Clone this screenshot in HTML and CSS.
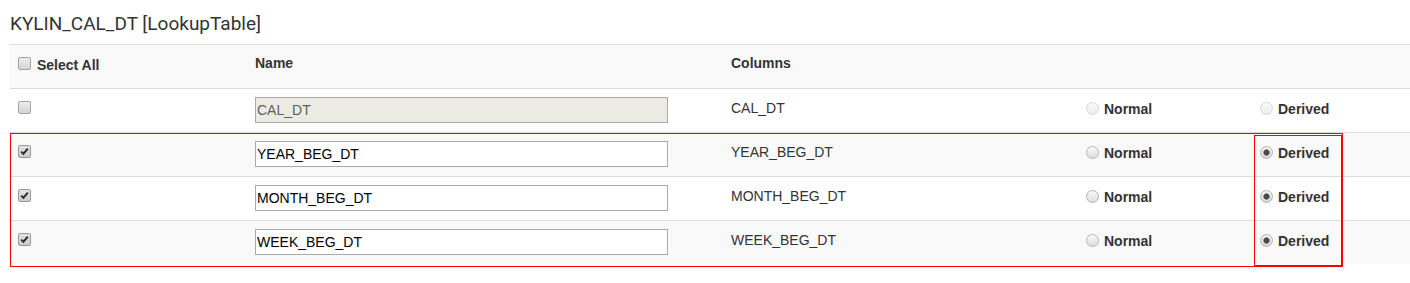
FILE: index.html
```html
<!DOCTYPE html>
<html>
<head>
<meta charset="utf-8">
<link rel="stylesheet" href="styles.css">
</head>
<body>
<div class="page">
  <h3 class="title">KYLIN_CAL_DT [LookupTable]</h3>
  <div class="grid">
    <div class="row head">
      <div class="cell sel"><label class="chk"><span class="cb"></span>Select All</label></div>
      <div class="cell th">Name</div>
      <div class="cell th">Columns</div>
      <div class="cell"></div>
      <div class="cell"></div>
    </div>
    <div class="row">
      <div class="cell c1"><span class="cb"></span></div>
      <div class="cell c2"><input class="inp" type="text" value="CAL_DT" disabled></div>
      <div class="cell c3">CAL_DT</div>
      <div class="cell c4"><label class="opt"><span class="rd dis"></span>Normal</label></div>
      <div class="cell c4"><label class="opt"><span class="rd dis"></span>Derived</label></div>
    </div>
    <div class="row alt">
      <div class="cell c1"><span class="cb on"><svg viewBox="0 0 11 11" width="11" height="11"><path d="M2.2 5.6 L4.4 7.8 L8.8 2.6" fill="none" stroke="#2b2b2b" stroke-width="2"/></svg></span></div>
      <div class="cell c2"><input class="inp" type="text" value="YEAR_BEG_DT"></div>
      <div class="cell c3">YEAR_BEG_DT</div>
      <div class="cell c4"><label class="opt"><span class="rd"></span>Normal</label></div>
      <div class="cell c4"><label class="opt"><span class="rd on"></span>Derived</label></div>
    </div>
    <div class="row">
      <div class="cell c1"><span class="cb on"><svg viewBox="0 0 11 11" width="11" height="11"><path d="M2.2 5.6 L4.4 7.8 L8.8 2.6" fill="none" stroke="#2b2b2b" stroke-width="2"/></svg></span></div>
      <div class="cell c2"><input class="inp" type="text" value="MONTH_BEG_DT"></div>
      <div class="cell c3">MONTH_BEG_DT</div>
      <div class="cell c4"><label class="opt"><span class="rd"></span>Normal</label></div>
      <div class="cell c4"><label class="opt"><span class="rd on"></span>Derived</label></div>
    </div>
    <div class="row alt">
      <div class="cell c1"><span class="cb on"><svg viewBox="0 0 11 11" width="11" height="11"><path d="M2.2 5.6 L4.4 7.8 L8.8 2.6" fill="none" stroke="#2b2b2b" stroke-width="2"/></svg></span></div>
      <div class="cell c2"><input class="inp" type="text" value="WEEK_BEG_DT"></div>
      <div class="cell c3">WEEK_BEG_DT</div>
      <div class="cell c4"><label class="opt"><span class="rd"></span>Normal</label></div>
      <div class="cell c4"><label class="opt"><span class="rd on"></span>Derived</label></div>
    </div>
  </div>
  <div class="mark mark-rows"></div>
  <div class="mark mark-col"></div>
</div>
</body>
</html>
```
FILE: styles.css
```css
html, body {
  margin: 0;
  padding: 0;
  background: #fff;
}
body {
  font-family: "Liberation Sans", Arial, sans-serif;
  font-size: 14px;
  line-height: 20px;
  color: #333;
}
.page {
  position: relative;
  padding-left: 10px;
  padding-bottom: 19px;
  width: 1400px;
}
.title {
  margin: 0;
  padding: 12px 0 8px;
  height: 24px;
  font-family: Roboto, "Liberation Sans", sans-serif;
  font-size: 19px;
  line-height: 24px;
  font-weight: 400;
  color: #333;
}
.grid {
  width: 1400px;
}
.row {
  display: grid;
  grid-template-columns: 237px 476px 355px 174px 158px;
  height: 44px;
  box-sizing: border-box;
  border-top: 1px solid #ddd;
  background: #fff;
}
.row.head,
.row.alt {
  background: #f9f9f9;
}
.cell {
  padding-left: 8px;
  box-sizing: border-box;
}
.sel {
  padding-top: 10px;
  padding-left: 8px;
}
.th {
  padding-top: 8px;
  font-weight: bold;
}
.chk {
  display: flex;
  align-items: flex-start;
  gap: 6px;
  font-weight: bold;
}
.chk .cb {
  margin-top: 2px;
}
.c1 {
  padding-top: 12px;
}
.c2 {
  padding-top: 8px;
}
.c3 {
  padding-top: 9px;
}
.c4 {
  padding-top: 10px;
}
.cb {
  display: flex;
  align-items: center;
  justify-content: center;
  width: 13px;
  height: 13px;
  box-sizing: border-box;
  border: 1px solid #a3a3a3;
  border-radius: 2px;
  background: linear-gradient(#ededed, #d4d4d4);
}
.cb.on {
  background: linear-gradient(#e3e3e3, #cbcbcb);
  border-color: #999;
}
.inp {
  display: block;
  width: 413px;
  height: 26px;
  box-sizing: border-box;
  margin: 0;
  padding: 0 1px;
  border: 1px solid #a9a9a9;
  border-radius: 0;
  background: #fff;
  font-family: "Liberation Sans", Arial, sans-serif;
  font-size: 14px;
  color: #000;
  outline: none;
}
.inp:disabled {
  background: #ebebe4;
  color: #5e5e5e;
}
.opt {
  display: flex;
  align-items: flex-start;
  gap: 5px;
  font-weight: bold;
}
.rd {
  margin-top: 3px;
  width: 13px;
  height: 13px;
  box-sizing: border-box;
  border-radius: 50%;
  border: 1px solid #b3b3b3;
  background: linear-gradient(#fbfbfb, #dcdcdc);
}
.rd.dis {
  border-color: #d6d6d6;
  background: linear-gradient(#fafafa, #ececec);
}
.rd.on {
  background: radial-gradient(circle at 50% 50%, #4a4a4a 0, #4a4a4a 2.3px, #8a8a8a 3px, transparent 3.6px), linear-gradient(#f6f6f6, #d6d6d6);
}
.mark {
  position: absolute;
  box-sizing: border-box;
  border: 1px solid #f00;
  pointer-events: none;
}
.mark-rows {
  left: 10px;
  top: 133px;
  width: 1333px;
  height: 134px;
}
.mark-col {
  left: 1254px;
  top: 135px;
  width: 88px;
  height: 131px;
}
```
